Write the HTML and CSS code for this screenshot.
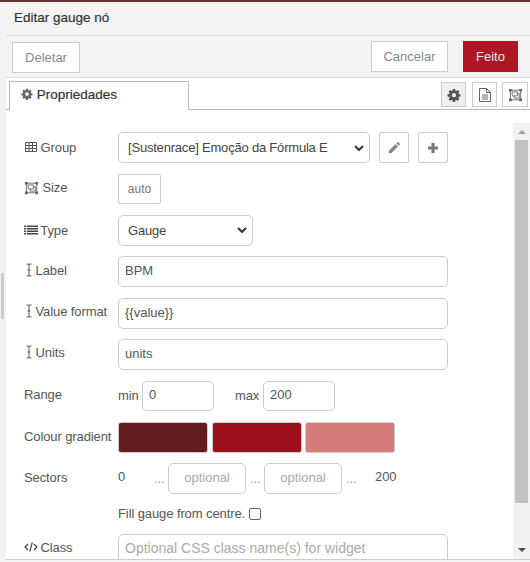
FILE: index.html
```html
<!DOCTYPE html>
<html lang="pt">
  <head>
    <meta charset="UTF-8" />
    <title>Editar gauge nó</title>
    <link rel="stylesheet" href="styles.css">
  </head>
  <body>
    <div class="topline"></div>
    <div class="layout">
      <div class="sash"><div class="sash-grip"></div></div>
      <div class="tray">
        <div class="tray-title">Editar gauge nó</div>
        <div class="toolbar">
          <button class="btn btn-delete">Deletar</button>
          <div class="toolbar-right">
            <button class="btn btn-cancel">Cancelar</button>
            <button class="btn btn-done">Feito</button>
          </div>
        </div>

        <div class="tabs">
          <div class="tab">
            <svg class="ico ico-gear" viewBox="0 0 16 16"><use href="#gear"/></svg>
            Propriedades
          </div>
          <div class="tab-icons">
            <div class="tab-btn selected"><svg class="ico ico-gear-dark" viewBox="0 0 16 16"><use href="#gear"/></svg></div>
            <div class="tab-btn">
              <svg class="ico ico-file" viewBox="0 0 16 16" fill="none" stroke="#666" stroke-width="1"><path d="M2.500 1.500h7l4 4v9h-11zM9.500 1.500v4h4M5 8h6M5 10h6M5 12h6"/></svg>
            </div>
            <div class="tab-btn tab-btn-last">
              <svg class="ico ico-wide" viewBox="0 0 16 16" preserveAspectRatio="none"><use href="#ungroup"/></svg>
            </div>
          </div>
        </div>

        <div class="body">
          <div class="form">
            <div class="row">
              <label class="lbl">
                <svg class="ico" viewBox="0 0 14 14" fill="none" stroke="#555"><path d="M1.500 2.500h11v9h-11zM1.500 5.500h11M1.500 8.500h11M5 2.500v9M8.500 2.500v9"/></svg>
                Group
              </label>
              <div class="select select-group">[Sustenrace] Emoção da Fórmula E<svg class="chev" viewBox="0 0 10 6"><path d="M1 1l4 4 4-4" fill="none" stroke="#333" stroke-width="2"/></svg></div>
              <button class="square">
                <svg class="ico" viewBox="0 0 14 14"><path d="M1.500 12.500l.6-3 6.500-6.500 2.400 2.400-6.500 6.500zM9.300 2.300l1-1q.6-.5 1.200 0l1.200 1.200q.5.6 0 1.200l-1 1z" fill="#888"/></svg>
              </button>
              <button class="square">
                <svg class="ico" viewBox="0 0 14 14"><path d="M5.500 2h3v3.500h3.500v3h-3.500v3.500h-3v-3.500h-3.500v-3h3.500z" fill="#777"/></svg>
              </button>
            </div>

            <div class="row">
              <label class="lbl lbl-up">
                <svg class="ico ico-wide" viewBox="0 0 16 16" preserveAspectRatio="none"><use href="#ungroup"/></svg>
                Size
              </label>
              <button class="size-btn">auto</button>
            </div>

            <div class="row">
              <label class="lbl">
                <svg class="ico" viewBox="0 0 14 14" fill="#444"><path d="M0 2.500h2v1.500h-2zM3 2.500h11v1.500h-11zM0 5h2v1.500h-2zM3 5h11v1.500h-11zM0 7.500h2v1.500h-2zM3 7.500h11v1.500h-11zM0 10h2v1.500h-2zM3 10h11v1.500h-11z"/></svg>
                Type
              </label>
              <div class="select select-type">Gauge<svg class="chev" viewBox="0 0 10 6"><path d="M1 1l4 4 4-4" fill="none" stroke="#333" stroke-width="2"/></svg></div>
            </div>

            <div class="row">
              <label class="lbl lbl-up">
                <svg class="ico ico-cursor" viewBox="0 0 8 14"><use href="#cursor"/></svg>
                Label
              </label>
              <input class="field" type="text" value="BPM">
            </div>

            <div class="row">
              <label class="lbl lbl-up">
                <svg class="ico ico-cursor" viewBox="0 0 8 14"><use href="#cursor"/></svg>
                Value format
              </label>
              <input class="field" type="text" value="{{value}}">
            </div>

            <div class="row">
              <label class="lbl lbl-up">
                <svg class="ico ico-cursor" viewBox="0 0 8 14"><use href="#cursor"/></svg>
                Units
              </label>
              <input class="field" type="text" value="units">
            </div>

            <div class="row">
              <label class="lbl lbl-up">Range</label>
              <span class="word word-min">min</span>
              <input class="field field-range" type="text" value="0">
              <span class="word word-max">max</span>
              <input class="field field-range" type="text" value="200">
            </div>

            <div class="row">
              <label class="lbl lbl-colour">Colour gradient</label>
              <div class="swatches">
                <button class="swatch swatch-dark"></button>
                <button class="swatch swatch-red"></button>
                <button class="swatch swatch-light"></button>
              </div>
            </div>

            <div class="row">
              <label class="lbl lbl-up">Sectors</label>
              <span class="word sector-start">0</span>
              <span class="dots">...</span>
              <input class="field field-sector" type="text" placeholder="optional">
              <span class="dots">...</span>
              <input class="field field-sector" type="text" placeholder="optional">
              <span class="dots">...</span>
              <span class="word sector-end">200</span>
            </div>

            <div class="row row-check">
              <span class="check-text">Fill gauge from centre.</span>
              <span class="checkbox"></span>
            </div>

            <div class="row">
              <label class="lbl lbl-up">
                <svg class="ico" viewBox="0 0 14 14" fill="none" stroke="#444" stroke-width="1.200"><path d="M4 4l-3 3 3 3M10 4l3 3-3 3M8.300 2.500l-2.600 9"/></svg>
                Class
              </label>
              <input class="field field-class" type="text" placeholder="Optional CSS class name(s) for widget">
            </div>
          </div>

          <div class="scrollbar">
            <div class="scroll-arrow arrow-up"></div>
            <div class="scroll-thumb"></div>
            <div class="scroll-arrow arrow-down"></div>
          </div>
        </div>
        <div class="footer"></div>
      </div>
    </div>

    <svg class="defs" width="0" height="0">
      <defs>
        <path id="gear" fill-rule="evenodd" d="M6.800 1h2.400l.4 1.900 1.100.5 1.700-1 1.700 1.700-1 1.700.5 1.100 1.900.4v2.400l-1.900.4-.5 1.100 1 1.700-1.700 1.700-1.700-1-1.100.5-.4 1.900h-2.400l-.4-1.900-1.100-.5-1.700 1-1.700-1.700 1-1.700-.5-1.100-1.900-.4v-2.400l1.900-.4.5-1.100-1-1.700 1.700-1.700 1.700 1 1.100-.5zM8 5.800a2.400 2.400 0 1 0 0 4.800 2.400 2.400 0 0 0 0-4.800z"/>
        <g id="ungroup">
          <path fill="none" stroke="#666" d="M2 2.500h12M2 13.500h12M2.500 2v12M13.500 2v12"/>
          <path fill="none" stroke="#666" d="M4.500 4.500h5.500v4.500h-5.500zM6.500 9v2.500h5.500v-5h-2"/>
          <path fill="#666" d="M1 1h3v3h-3zM12 1h3v3h-3zM1 12h3v3h-3zM12 12h3v3h-3z"/>
        </g>
        <path id="cursor" fill="none" stroke="#555" d="M1.500 1h1.500q1 0 1 1v10q0 1-1 1h-1.500M6.500 1h-1.500q-1 0-1 1M6.500 13h-1.500q-1 0-1-1M2.500 7h3"/>
      </defs>
    </svg>
  </body>
</html>
```

FILE: styles.css
```css
* {
  box-sizing: border-box;
  margin: 0;
  padding: 0;
}
html, body {
  height: 562px;
  overflow: hidden;
}
body {
  background-color: #fff;
  color: #555;
  font-family: "Liberation Sans", Arial, sans-serif;
  font-size: 13px;
}
.defs {
  position: absolute;
}
.topline {
  height: 2px;
  background: linear-gradient(#444, #8c1c28);
}
.layout {
  display: flex;
  height: 560px;
}

/* left resize strip */
.sash {
  width: 6px;
  flex: none;
  background-color: #f3f3f3;
  padding-top: 271px;
  padding-left: 1px;
}
.sash-grip {
  width: 3px;
  height: 46px;
  background-color: #ccc;
}
.tray {
  flex: 1;
  min-width: 0;
  display: flex;
  flex-direction: column;
}
.tray-title {
  height: 34px;
  padding: 8px 8px 0;
  background-color: #f3f3f3;
  border-bottom: 1px solid #ddd;
  color: #333;
  font-size: 13.5px;
  -webkit-text-stroke: 0.2px #333;
}
.toolbar {
  height: 42px;
  display: flex;
  justify-content: space-between;
  padding: 5px 12px 0 6px;
  background-color: #f3f3f3;
  border-bottom: 1px solid #ddd;
}
.toolbar-right {
  display: flex;
  gap: 15px;
}
.btn {
  height: 31px;
  font: inherit;
  color: #888;
  background-color: #fff;
  border: 1px solid #ccc;
}
.btn-delete {
  width: 68px;
  margin-top: 1px;
}
.btn-cancel {
  width: 77px;
}
.btn-done {
  width: 55px;
  color: #eee;
  background-color: #ad1625;
  border-color: #ad1625;
}

/* tabs */
.tabs {
  height: 32px;
  flex: none;
  display: flex;
  justify-content: space-between;
  padding-left: 3px;
  border-bottom: 1px solid #bbb;
}
.tab {
  width: 180px;
  height: 29px;
  margin-top: 3px;
  padding: 5px 0 0 11px;
  background-color: #fff;
  border: 1px solid #bbb;
  border-bottom: none;
  color: #333;
  font-size: 13.5px;
  -webkit-text-stroke: 0.2px #333;
}
.ico {
  width: 14px;
  height: 14px;
  flex: none;
  vertical-align: -2px;
}
.ico-wide {
  width: 15px;
  height: 14px;
  vertical-align: -3px;
}
.ico-gear {
  width: 12px;
  height: 12px;
  vertical-align: -1px;
  fill: #666;
}
.ico-gear-dark {
  fill: #555;
}
.ico-file {
  width: 16px;
  height: 16px;
}
.ico-cursor {
  width: 8px;
  margin-left: 1px;
}
.tab-icons {
  display: flex;
  gap: 6px;
  padding: 4px 2px 0 0;
}
.tab-btn {
  width: 25px;
  height: 25px;
  display: flex;
  align-items: center;
  justify-content: center;
  background-color: #fff;
  border: 1px solid #ccc;
}
.tab-btn.selected {
  background-color: #efefef;
}
.tab-btn-last {
  width: 26px;
  margin-left: -1px;
}

/* form */
.body {
  flex: 1;
  min-height: 0;
  display: flex;
  overflow: hidden;
}
.form {
  flex: 1;
  min-width: 0;
  padding: 22px 0 0 18px;
}
.row {
  display: flex;
  align-items: center;
  height: 31px;
  margin-bottom: 10.4px;
  color: #555;
  letter-spacing: -0.1px;
}
.lbl {
  width: 94px;
  flex: none;
  white-space: nowrap;
}
.lbl .ico {
  margin-right: -1px;
}
.lbl .ico-wide {
  margin-right: 0;
}
.lbl-up {
  padding-bottom: 3px;
}
.lbl-colour {
  padding-bottom: 2px;
}
.select {
  height: 31px;
  display: flex;
  align-items: center;
  justify-content: space-between;
  padding: 0 5px 0 9px;
  background-color: #fff;
  border: 1px solid #ccc;
  border-radius: 5px;
  color: #444;
  white-space: nowrap;
  letter-spacing: -0.2px;
}
.select-group {
  width: 252px;
}
.select-type {
  width: 135px;
}
.chev {
  width: 10px;
  height: 6px;
  flex: none;
}
.square {
  width: 30px;
  height: 31px;
  margin-left: 9px;
  display: flex;
  align-items: center;
  justify-content: center;
  background-color: #fff;
  border: 1px solid #ccc;
  border-radius: 2px;
}
.size-btn {
  width: 43px;
  height: 30px;
  font: inherit;
  font-size: 12px;
  color: #777;
  background-color: #fff;
  border: 1px solid #ccc;
  border-radius: 2px;
}
.field {
  width: 330px;
  height: 31px;
  padding: 0 6px 2px;
  font: inherit;
  color: #555;
  background-color: #fff;
  border: 1px solid #ccc;
  border-radius: 5px;
  outline: none;
}
.field::placeholder {
  color: #aaa;
}
.field-class {
  font-size: 14px;
  letter-spacing: 0;
}
.word-min {
  width: 24px;
}
.word-max {
  width: 28px;
  margin-left: 21px;
}
.field-range {
  width: 72px;
  height: 30px;
}
.swatches {
  display: flex;
  gap: 3.5px;
}
.swatch {
  width: 90px;
  height: 31px;
  border: 1px solid #ccc;
  border-radius: 3px;
}
.swatch-dark {
  background-color: #651c21;
}
.swatch-red {
  background-color: #9c101b;
}
.swatch-light {
  background-color: #d57b7a;
}
.sector-start {
  width: 36px;
  padding-bottom: 4px;
}
.dots {
  width: 14px;
  color: #999;
  padding-bottom: 1px;
}
.field-sector {
  width: 78px;
  margin-right: 4px;
  text-align: center;
}
.sector-end {
  margin-left: 15px;
  padding-bottom: 4px;
}
.row-check {
  height: 18px;
  margin-bottom: 11.4px;
  padding-left: 94px;
  gap: 4px;
}
.checkbox {
  width: 12px;
  height: 12px;
  border: 1px solid #666;
  border-radius: 2px;
  background-color: #fff;
}

/* scrollbar */
.scrollbar {
  width: 17px;
  flex: none;
  margin: 13px 0 0;
  display: flex;
  flex-direction: column;
  align-items: center;
  background-color: #f1f1f1;
}
.scroll-arrow {
  width: 0;
  height: 0;
  flex: none;
  border-left: 4px solid transparent;
  border-right: 4px solid transparent;
}
.arrow-up {
  margin: 7px 0 6px;
  border-bottom: 4px solid #a3a3a3;
}
.arrow-down {
  margin-top: 45px;
  border-top: 4px solid #505050;
}
.scroll-thumb {
  width: 13px;
  height: 363px;
  flex: none;
  background-color: #c1c1c1;
}
.footer {
  height: 3px;
  flex: none;
  background-color: #f3f3f3;
  border-top: 1px solid #ccc;
}
```
